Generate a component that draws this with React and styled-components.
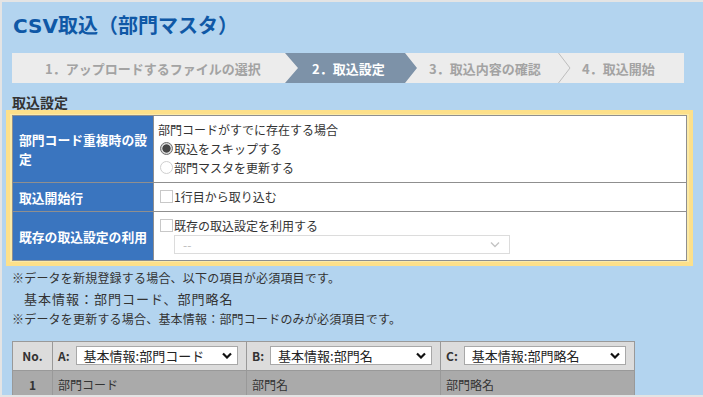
import React from 'react';
import styled, { createGlobalStyle } from 'styled-components';

const jp = `"Noto Sans CJK JP", "Liberation Sans", sans-serif`;

const GlobalStyle = createGlobalStyle`
  html, body {
    margin: 0;
    padding: 0;
    background: #e4e4e4;
    overflow: hidden;
    font-family: ${jp};
  }
`;

const Panel = styled.div`
  width: 701px;
  height: 393px;
  margin: 2px 0 2px 2px;
  padding: 12px 10px 0;
  box-sizing: border-box;
  background: #b3d4ef;
  overflow: hidden;
`;

const Title = styled.h1`
  margin: 0 0 15px 1px;
  font-size: 20px;
  line-height: 24px;
  font-weight: bold;
  color: #0f58a6;
  font-family: "DejaVu Sans", "Noto Sans CJK JP", sans-serif;
`;

const Steps = styled.div`
  display: flex;
  width: 672px;
  height: 30px;
  background: #ececec;
`;

const Step = styled.div`
  display: flex;
  align-items: center;
  box-sizing: border-box;
  width: ${p => (p.$w ? `${p.$w}px` : 'auto')};
  flex: ${p => (p.$w ? 'none' : '1')};
  padding-left: ${p => p.$pl}px;
  font-size: 13px;
  font-weight: bold;
  white-space: nowrap;
  color: ${p => (p.$active ? '#fff' : '#a3a3a3')};
  background: ${p => (p.$active ? '#7d92a8' : 'transparent')};
  clip-path: ${p =>
    p.$active
      ? 'polygon(0 0, calc(100% - 12px) 0, 100% 50%, calc(100% - 12px) 100%, 0 100%, 13px 50%)'
      : 'none'};
`;

const Divider = () => (
  <svg width="13" height="30" viewBox="0 0 13 30" style={{ flex: 'none' }}>
    <polyline points="0.5,0 12,15 0.5,30" fill="none" stroke="#bdbdbd" strokeWidth="1" />
  </svg>
);

const Heading = styled.h2`
  margin: 11px 0 0;
  font-size: 14px;
  line-height: 16px;
  font-weight: bold;
  color: #333;
`;

const Highlight = styled.div`
  width: 675px;
  margin-left: -6px;
  padding: 1px 2px;
  border: 4px solid #fde08a;
  background: #fbeaa8;
`;

const FormTable = styled.table`
  width: 675px;
  border-collapse: collapse;
  border: 1px solid #8f8f8f;
  background: #fff;
  table-layout: fixed;
`;

const Label = styled.th`
  width: 141px;
  padding: 0 4px 0 6px;
  background: #3a75bf;
  color: #fff;
  font-size: 12.8px;
  line-height: 19px;
  font-weight: bold;
  text-align: left;
  border: 1px solid #8f8f8f;
  height: ${p => p.$h}px;
  box-sizing: border-box;
`;

const Value = styled.td`
  padding: 4px 4px 5px;
  font-size: 12px;
  line-height: 19px;
  color: #333;
  vertical-align: top;
  border: 1px solid #8f8f8f;
`;

const Line = styled.div`
  display: flex;
  align-items: center;
  height: 19px;
  padding-left: ${p => (p.$box ? 2 : 0)}px;
`;

const Radio = styled.span`
  width: 11px;
  height: 11px;
  margin-right: 1px;
  border-radius: 50%;
  border: 1px solid ${p => (p.$checked ? '#6f6f6f' : '#cfcfcf')};
  background: ${p =>
    p.$checked ? 'radial-gradient(circle, #474747 0 3.8px, #d6d6d6 4.4px)' : '#fff'};
`;

const Check = styled.span`
  width: 11px;
  height: 11px;
  margin-right: 1px;
  border: 1px solid #c8c8c8;
  background: #fff;
`;

const Chevron = ({ color, bold }) => (
  <svg width="10" height="7" viewBox="0 0 10 7">
    <polyline
      points="1,1.5 5,5.5 9,1.5"
      fill="none"
      stroke={color}
      strokeWidth={bold ? 2.2 : 1.4}
    />
  </svg>
);

const DisabledSelect = styled.div`
  display: flex;
  align-items: center;
  justify-content: space-between;
  width: 336px;
  height: 19px;
  margin: 0 0 0 16px;
  padding: 0 9px 0 8px;
  box-sizing: border-box;
  border: 1px solid #dcdcdc;
  color: #bbb;
  font-size: 12px;
`;

const Notes = styled.div`
  margin-top: 2px;
  font-size: 12px;
  line-height: 20.5px;
  letter-spacing: 0.2px;
  color: #333;
`;

const Indent = styled.div`
  padding-left: 12px;
  font-size: 13px;
  letter-spacing: 1px;
`;

const MapTable = styled.table`
  margin-top: 11px;
  border-collapse: collapse;
  border: 1px solid #999;
  font-size: 12px;
  color: #333;
`;

const HeadCell = styled.th`
  width: ${p => p.$w}px;
  height: 29px;
  padding: 0 5px;
  box-sizing: border-box;
  background: #dcdcdc;
  border: 1px solid #999;
  font-weight: bold;
  text-align: ${p => (p.$center ? 'center' : 'left')};
`;

const ColHead = styled.div`
  display: flex;
  align-items: center;
  gap: 6px;
`;

const Select = styled.div`
  display: flex;
  align-items: center;
  justify-content: space-between;
  width: 162px;
  height: 19px;
  padding: 0 5px 0 7px;
  box-sizing: border-box;
  border: 1px solid #a8a8a8;
  background: #fff;
  font-size: 13px;
  font-weight: normal;
  color: #222;
`;

const DataCell = styled.td`
  height: 27px;
  padding: 0 5px;
  background: #aaa;
  border: 1px solid #999;
  text-align: ${p => (p.$center ? 'center' : 'left')};
  font-weight: ${p => (p.$center ? 'bold' : 'normal')};
`;

const columns = [
  { key: 'A', label: '基本情報:部門コード', value: '部門コード' },
  { key: 'B', label: '基本情報:部門名', value: '部門名' },
  { key: 'C', label: '基本情報:部門略名', value: '部門略名' },
];

export default function App() {
  return (
    <>
      <GlobalStyle />
      <Panel>
        <Title>CSV取込（部門マスタ）</Title>
        <Steps>
          <Step $w={273} $pl={33}>1．アップロードするファイルの選択</Step>
          <Step $w={132} $pl={27} $active>2．取込設定</Step>
          <Step $w={141} $pl={12}>3．取込内容の確認</Step>
          <Divider />
          <Step $pl={11}>4．取込開始</Step>
        </Steps>

        <Heading>取込設定</Heading>
        <Highlight>
          <FormTable>
            <tbody>
              <tr>
                <Label $h={67}>部門コード重複時の設定</Label>
                <Value>
                  <Line>部門コードがすでに存在する場合</Line>
                  <Line $box><Radio $checked />取込をスキップする</Line>
                  <Line $box><Radio />部門マスタを更新する</Line>
                </Value>
              </tr>
              <tr>
                <Label $h={29}>取込開始行</Label>
                <Value>
                  <Line $box><Check />1行目から取り込む</Line>
                </Value>
              </tr>
              <tr>
                <Label $h={49}>既存の取込設定の利用</Label>
                <Value>
                  <Line $box><Check />既存の取込設定を利用する</Line>
                  <DisabledSelect>
                    <span>--</span>
                    <Chevron color="#c4c4c4" />
                  </DisabledSelect>
                </Value>
              </tr>
            </tbody>
          </FormTable>
        </Highlight>

        <Notes>
          <div>※データを新規登録する場合、以下の項目が必須項目です。</div>
          <Indent>基本情報：部門コード、部門略名</Indent>
          <div>※データを更新する場合、基本情報：部門コードのみが必須項目です。</div>
        </Notes>

        <MapTable>
          <thead>
            <tr>
              <HeadCell $w={40} $center>No.</HeadCell>
              {columns.map(c => (
                <HeadCell key={c.key} $w={194}>
                  <ColHead>
                    <span>{c.key}:</span>
                    <Select>
                      <span>{c.label}</span>
                      <Chevron color="#111" bold />
                    </Select>
                  </ColHead>
                </HeadCell>
              ))}
            </tr>
          </thead>
          <tbody>
            <tr>
              <DataCell $center>1</DataCell>
              {columns.map(c => (
                <DataCell key={c.key}>{c.value}</DataCell>
              ))}
            </tr>
          </tbody>
        </MapTable>
      </Panel>
    </>
  );
}
